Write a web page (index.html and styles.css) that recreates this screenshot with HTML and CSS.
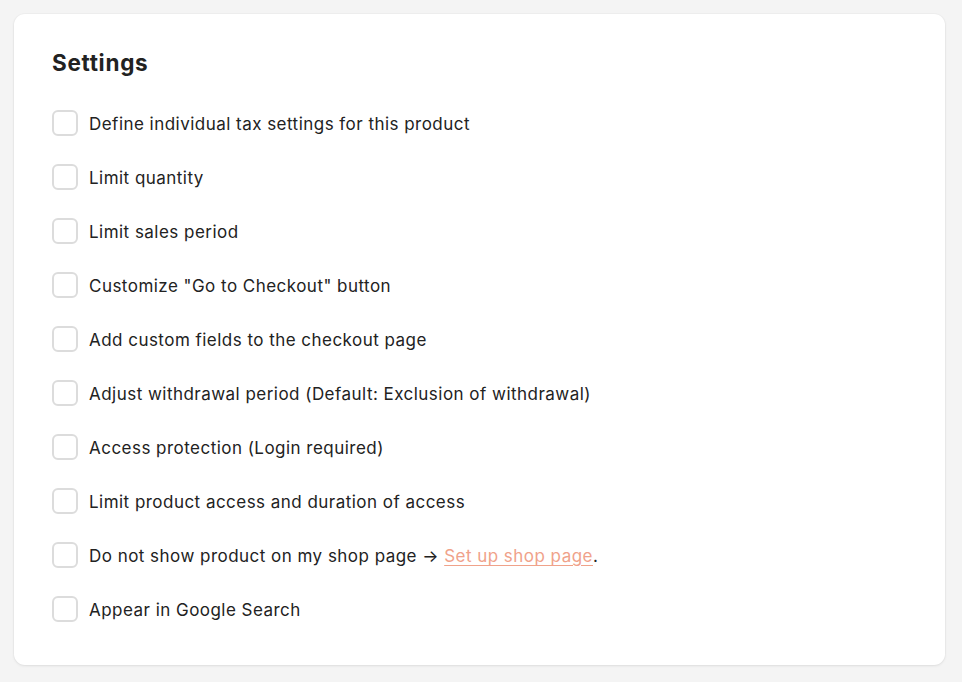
FILE: index.html
```html
<!DOCTYPE html>
<html>
<head>
<meta charset="utf-8">
<link rel="stylesheet" href="styles.css">
</head>
<body>
<div class="page">
  <section class="card">
    <h2 class="title">Settings</h2>
    <ul class="options">
      <li class="option"><span class="box"></span><span class="label">Define individual tax settings for this product</span></li>
      <li class="option"><span class="box"></span><span class="label">Limit quantity</span></li>
      <li class="option"><span class="box"></span><span class="label">Limit sales period</span></li>
      <li class="option"><span class="box"></span><span class="label">Customize "Go to Checkout" button</span></li>
      <li class="option"><span class="box"></span><span class="label">Add custom fields to the checkout page</span></li>
      <li class="option"><span class="box"></span><span class="label">Adjust withdrawal period (Default: Exclusion of withdrawal)</span></li>
      <li class="option"><span class="box"></span><span class="label">Access protection (Login required)</span></li>
      <li class="option"><span class="box"></span><span class="label">Limit product access and duration of access</span></li>
      <li class="option"><span class="box"></span><span class="label">Do not show product on my shop page → <a class="link" href="#">Set up shop page</a>.</span></li>
      <li class="option"><span class="box"></span><span class="label">Appear in Google Search</span></li>
    </ul>
  </section>
</div>
</body>
</html>
```

FILE: styles.css
```css
html, body {
  margin: 0;
  padding: 0;
  background: #f4f4f4;
}
body {
  font-family: Inter, "Noto Sans", sans-serif;
  color: #222;
}
.page {
  padding: 14px 17px 17px 14px;
}
.card {
  background: #fff;
  border-radius: 11px;
  box-shadow: 0 1px 3px rgba(0,0,0,0.08), 0 0 0 1px rgba(0,0,0,0.02);
  padding: 36px 38px 43px;
  height: 651px;
  box-sizing: border-box;
}
.title {
  margin: 0 0 34px;
  font-size: 22.5px;
  line-height: 26px;
  font-weight: 700;
  letter-spacing: 0.7px;
  color: #222;
}
.options {
  list-style: none;
  margin: 0;
  padding: 0;
  display: flex;
  flex-direction: column;
  gap: 28px;
}
.option {
  display: flex;
  align-items: center;
  gap: 11px;
  height: 26px;
}
.box {
  width: 26px;
  height: 26px;
  box-sizing: border-box;
  border: 2px solid #dcdcdc;
  border-radius: 6px;
  flex: none;
}
.label {
  font-size: 17px;
  line-height: 22px;
  letter-spacing: 0.47px;
  margin-top: 2px;
  color: #222;
}
.link {
  color: #f0a28a;
  text-decoration: underline;
  text-underline-offset: 3px;
}
```
